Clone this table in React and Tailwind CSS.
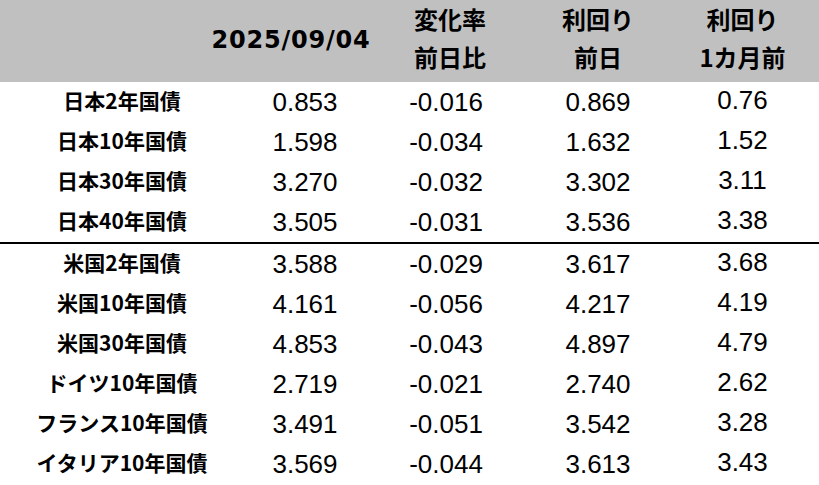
import React from "react";

const rows = [
  ["日本2年国債", "0.853", "-0.016", "0.869", "0.76"],
  ["日本10年国債", "1.598", "-0.034", "1.632", "1.52"],
  ["日本30年国債", "3.270", "-0.032", "3.302", "3.11"],
  ["日本40年国債", "3.505", "-0.031", "3.536", "3.38"],
  ["米国2年国債", "3.588", "-0.029", "3.617", "3.68"],
  ["米国10年国債", "4.161", "-0.056", "4.217", "4.19"],
  ["米国30年国債", "4.853", "-0.043", "4.897", "4.79"],
  ["ドイツ10年国債", "2.719", "-0.021", "2.740", "2.62"],
  ["フランス10年国債", "3.491", "-0.051", "3.542", "3.28"],
  ["イタリア10年国債", "3.569", "-0.044", "3.613", "3.43"],
];

const cols = "grid grid-cols-[244px_122px_164px_136px_153px]";
const jp = { fontFamily: '"Noto Sans CJK JP", sans-serif' };
const num = { fontFamily: '"Liberation Sans", Arial, sans-serif' };

function Row({ r }) {
  return (
    <div className={`${cols} h-[40px] items-center`}>
      <div className="text-center text-[21px] font-bold leading-none pb-[4px]" style={jp}>{r[0]}</div>
      <div className="text-center text-[26px] leading-none" style={num}>{r[1]}</div>
      <div className="text-center text-[26px] leading-none pr-[4px]" style={num}>{r[2]}</div>
      <div className="text-center text-[26px] leading-none" style={num}>{r[3]}</div>
      <div className="text-center text-[26px] leading-none pb-[4px]" style={num}>{r[4]}</div>
    </div>
  );
}

export default function App() {
  return (
    <div className="w-[819px] h-[485px] bg-white text-black overflow-hidden">
      <div className={`${cols} h-[82px] bg-[#c0c0c0] font-bold text-[24px]`} style={jp}>
        <div />
        <div className="flex items-center justify-center pr-[28px] pb-[2px]">
          <span className="text-[24px] tracking-[0.8px]" style={{ fontFamily: '"DejaVu Sans", sans-serif' }}>2025/09/04</span>
        </div>
        <div className="flex flex-col items-center justify-between pb-[6px] pl-[4px] leading-[38px]">
          <span>変化率</span>
          <span>前日比</span>
        </div>
        <div className="flex flex-col items-center justify-between pb-[6px] leading-[38px]">
          <span>利回り</span>
          <span>前日</span>
        </div>
        <div className="flex flex-col items-center justify-between pb-[6px] leading-[38px]">
          <span>利回り</span>
          <span>1カ月前</span>
        </div>
      </div>
      {rows.slice(0, 4).map((r) => <Row key={r[0]} r={r} />)}
      <div className="h-[2px] bg-black" />
      {rows.slice(4).map((r) => <Row key={r[0]} r={r} />)}
    </div>
  );
}
